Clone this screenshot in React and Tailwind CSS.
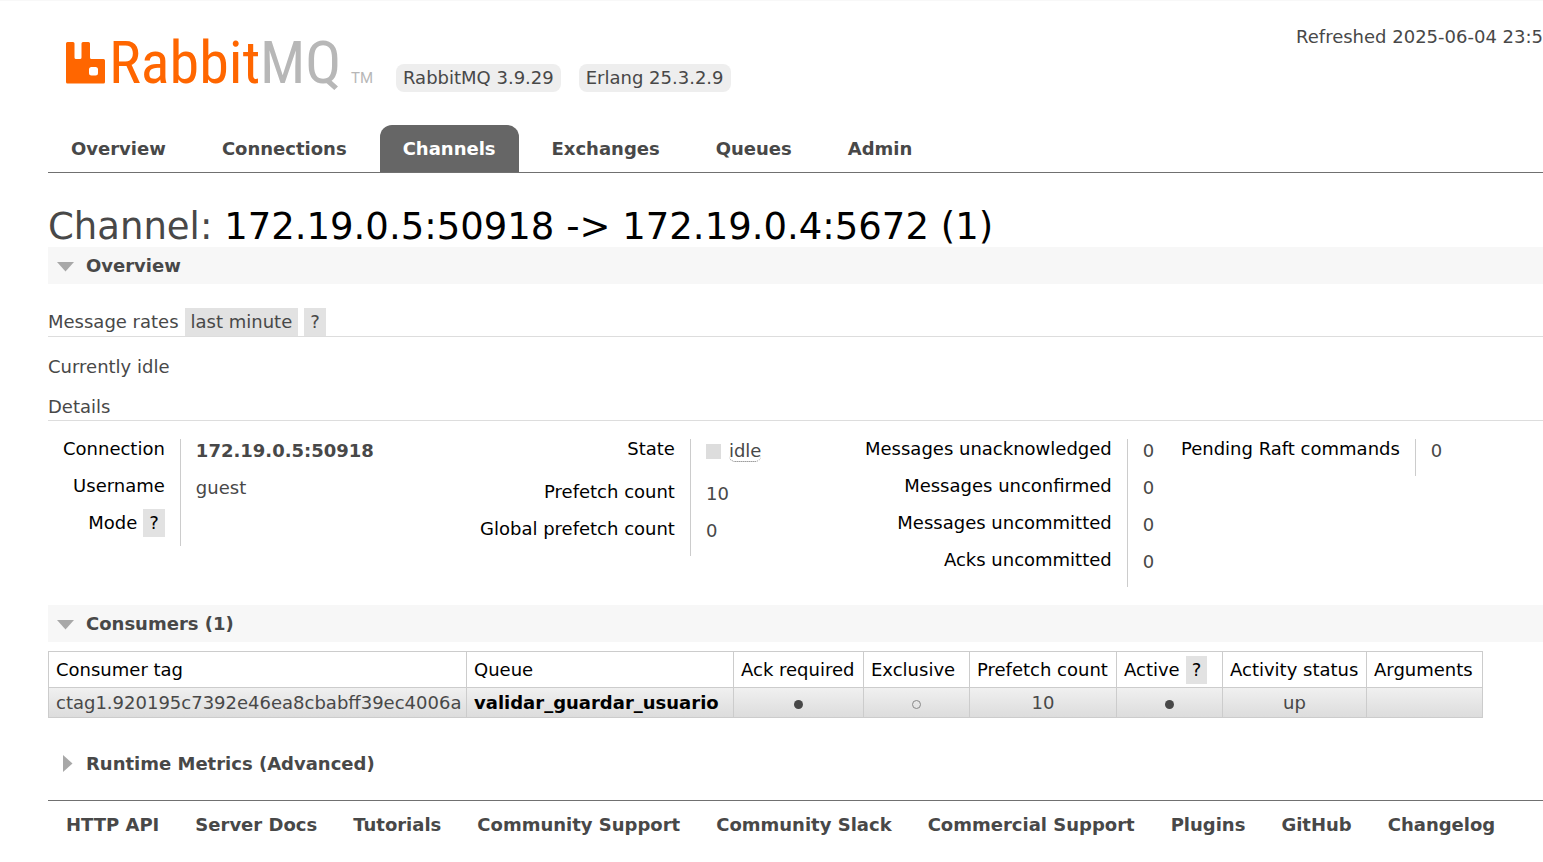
const tabs = ['Overview', 'Connections', 'Channels', 'Exchanges', 'Queues', 'Admin'];

const footerLinks = [
  'HTTP API',
  'Server Docs',
  'Tutorials',
  'Community Support',
  'Community Slack',
  'Commercial Support',
  'Plugins',
  'GitHub',
  'Changelog',
];

function Logo() {
  return (
    <a href="#" aria-label="RabbitMQ" className="flex items-end">
      <svg viewBox="0 0 39 42" className="h-[42px] w-[39px]" fill="#ff6600">
        <path
          fillRule="evenodd"
          d="M1.5 0H7a1.5 1.5 0 0 1 1.500 1.500V15.500a1.500 1.500 0 0 0 1.500 1.500h4a1.500 1.500 0 0 0 1.500-1.500V1.500A1.500 1.500 0 0 1 17 0h5.500A1.500 1.500 0 0 1 24 1.500V15.500a1.500 1.500 0 0 0 1.500 1.500H37.500A1.500 1.500 0 0 1 39 18.500V40a1.500 1.500 0 0 1-1.500 1.500H1.500A1.500 1.500 0 0 1 0 40V1.500A1.500 1.500 0 0 1 1.500 0ZM25.500 25a2.500 2.500 0 0 0-2.500 2.500v3.500a2.500 2.500 0 0 0 2.500 2.500h4a2.500 2.500 0 0 0 2.500-2.500v-3.500a2.500 2.500 0 0 0-2.500-2.500Z"
        />
      </svg>
      <svg
        viewBox="0 0 268 76"
        className="-mt-[14px] -mb-[16px] h-[76px] w-[268px]"
        fontFamily="'Roboto Condensed', 'Liberation Sans Narrow', sans-serif"
        fontSize="60"
        fill="#b7b7b7"
      >
        <text x="4" y="59" fill="#ff6600">Rabbit</text>
        <text x="155" y="59">MQ</text>
        <text x="246" y="59" fontSize="15" fontFamily="Roboto, sans-serif">TM</text>
      </svg>
    </a>
  );
}

function Pill({ children }) {
  return <span className="rounded-lg bg-[#eeeeee] px-[7px] leading-7">{children}</span>;
}

function Help() {
  return (
    <button type="button" className="bg-[#e2e2e2] px-[6px] leading-7">
      ?
    </button>
  );
}

function SectionHeading({ open, children }) {
  return (
    <h2 className={open ? 'bg-[#f7f7f7] font-bold' : 'font-bold'}>
      <button type="button" aria-expanded={open} className="flex w-full items-center pl-[9px] text-left leading-[37px]">
        <svg viewBox="0 0 18 18" className="mr-[11px] size-[18px]" fill="#a8a8a8">
          {open ? <path d="M0 5H17L8.500 14.500Z" /> : <path d="M6 0V17L15.500 8.500Z" />}
        </svg>
        {children}
      </button>
    </h2>
  );
}

function Facts({ className, rows }) {
  return (
    <div className={className}>
      <table>
        <tbody>
          {rows.map(([label, value, help]) => (
            <tr key={label} className="align-top">
              <th className="px-[15px] pb-[13px] text-right leading-5 font-normal whitespace-nowrap text-black">
                <span className="flex items-center justify-end gap-[6px]">
                  {label}
                  {help && <span className="-my-1 flex"><Help /></span>}
                </span>
              </th>
              <td className={`border-l border-[#cccccc] pl-[15px] leading-5 whitespace-nowrap ${value ? 'pt-[2px] pb-[15px]' : ''}`}>
                {value}
              </td>
            </tr>
          ))}
        </tbody>
      </table>
    </div>
  );
}

const idle = (
  <span className="flex items-center gap-2 pb-[5px]">
    <span className="size-[15px] bg-[#dddddd]" />
    <abbr title="Idle" className="rounded-md border-b border-dotted border-[#666666] no-underline">
      idle
    </abbr>
  </span>
);

const cell = 'border border-[#cccccc] px-[7px]';

export default function App() {
  return (
    <div className="min-h-screen overflow-x-hidden border-t border-[#f8f8f8] bg-white pl-12 font-['DejaVu_Sans','Verdana',sans-serif] text-[18px] leading-6 text-[#484848]">
      <header>
        <div className="flex items-start justify-between pt-6">
          <div className="flex items-end gap-[18px] pt-[13px] pl-[18px]">
            <div className="mr-[5px] mb-2"><Logo /></div>
            <Pill>RabbitMQ 3.9.29</Pill>
            <Pill>Erlang 25.3.2.9</Pill>
          </div>
          <p className="whitespace-nowrap">Refreshed 2025-06-04 23:5</p>
        </div>
        <nav className="mt-[33px] flex gap-[10px] border-b border-[#707070]">
          {tabs.map((t) => (
            <a
              key={t}
              href="#"
              className={
                t === 'Channels'
                  ? 'rounded-t-xl bg-[#666666] px-[23px] leading-[47px] font-bold text-white'
                  : 'px-[23px] leading-[47px] font-bold'
              }
            >
              {t}
            </a>
          ))}
        </nav>
      </header>

      <main>
        <h1 className="pt-[34px] text-[37px] leading-10 whitespace-nowrap">
          Channel: <b className="font-normal text-black">172.19.0.5:50918 -&gt; 172.19.0.4:5672 (1)</b>
        </h1>
        <SectionHeading open>Overview</SectionHeading>

        <div className="mt-6 flex gap-[6px] border-b border-[#dddddd] leading-7">
          <h3>Message rates</h3>
          <button type="button" className="bg-[#e2e2e2] px-[6px]">last minute</button>
          <Help />
        </div>
        <p className="mt-[18px]">Currently idle</p>
        <h3 className="mt-4 border-b border-[#dddddd] pb-px">Details</h3>

        <div className="mt-[18px] flex">
          <Facts
            className="w-[417px] shrink-0"
            rows={[
              ['Connection', <a href="#" className="font-bold">172.19.0.5:50918</a>],
              ['Username', 'guest'],
              ['Mode', null, true],
            ]}
          />
          <Facts
            className="w-[385px] shrink-0"
            rows={[
              ['State', idle],
              ['Prefetch count', '10'],
              ['Global prefetch count', '0'],
            ]}
          />
          <Facts
            className="w-[316px] shrink-0"
            rows={[
              ['Messages unacknowledged', '0'],
              ['Messages unconfirmed', '0'],
              ['Messages uncommitted', '0'],
              ['Acks uncommitted', '0'],
            ]}
          />
          <Facts className="shrink-0" rows={[['Pending Raft commands', '0']]} />
        </div>

        <div className="mt-[18px]">
          <SectionHeading open>Consumers (1)</SectionHeading>
        </div>
        <table className="mt-[9px] w-[1434px] table-fixed border-collapse whitespace-nowrap">
          <colgroup>
            <col className="w-[418px]" />
            <col className="w-[267px]" />
            <col className="w-[130px]" />
            <col className="w-[106px]" />
            <col className="w-[147px]" />
            <col className="w-[106px]" />
            <col className="w-[144px]" />
            <col className="w-[116px]" />
          </colgroup>
          <thead>
            <tr className="h-9 text-left text-black">
              {['Consumer tag', 'Queue', 'Ack required', 'Exclusive', 'Prefetch count'].map((h) => (
                <th key={h} className={`${cell} font-normal`}>{h}</th>
              ))}
              <th className={`${cell} font-normal`}>
                <span className="flex gap-[6px] leading-7">Active <Help /></span>
              </th>
              <th className={`${cell} font-normal`}>Activity status</th>
              <th className={`${cell} font-normal`}>Arguments</th>
            </tr>
          </thead>
          <tbody>
            <tr className="h-[30px] bg-linear-to-b from-[#f0f0f0] to-[#dcdcdc] text-center">
              <td className={`${cell} text-left`}>ctag1.920195c7392e46ea8cbabff39ec4006a</td>
              <td className={`${cell} text-left`}>
                <a href="#" className="font-bold text-black">validar_guardar_usuario</a>
              </td>
              <td className={cell}><span className="inline-block size-[9px] rounded-full bg-[#484848]" /></td>
              <td className={cell}><span className="inline-block size-[9px] rounded-full border border-[#888888]" /></td>
              <td className={cell}>10</td>
              <td className={cell}><span className="inline-block size-[9px] rounded-full bg-[#484848]" /></td>
              <td className={cell}>up</td>
              <td className={cell} />
            </tr>
          </tbody>
        </table>

        <div className="mt-[27px]">
          <SectionHeading open={false}>Runtime Metrics (Advanced)</SectionHeading>
        </div>
      </main>

      <footer className="mt-[18px] border-t border-[#707070] pt-3 pl-[18px]">
        <ul className="flex gap-9 font-bold whitespace-nowrap">
          {footerLinks.map((l) => (
            <li key={l}>
              <a href="#">{l}</a>
            </li>
          ))}
        </ul>
      </footer>
    </div>
  );
}
